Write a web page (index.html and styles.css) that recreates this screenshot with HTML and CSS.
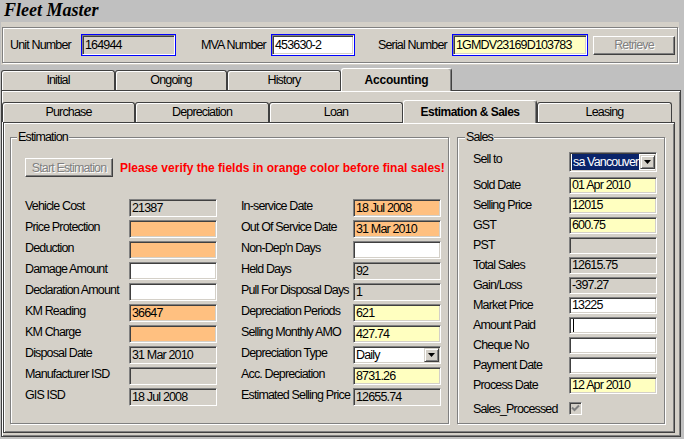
FILE: index.html
```html
<!DOCTYPE html>
<html>
<head>
<meta charset="utf-8">
<title>Fleet Master</title>
<link rel="stylesheet" href="styles.css">
</head>
<body>
<h1 class="title">Fleet Master</h1>

<div class="header-wrap">
  <div class="header">
    <span class="hlabel hl-unit">Unit Number</span>
    <div class="focus hf-unit"><div class="field hfield ro">164944</div></div>
    <span class="hlabel hl-mva">MVA Number</span>
    <div class="focus hf-mva"><div class="field hfield wh">453630-2</div></div>
    <span class="hlabel hl-serial">Serial Number</span>
    <div class="focus hf-serial"><div class="field hfield ye">1GMDV23169D103783</div></div>
    <button class="btn disabled retrieve" disabled>Retrieve</button>
  </div>
</div>

<div class="tabrow outer-tabs">
  <div class="tab ot1">Initial</div>
  <div class="tab ot2">Ongoing</div>
  <div class="tab ot3">History</div>
  <div class="tab sel ot4">Accounting</div>
</div>

<div class="pane outer-pane">
  <div class="tabrow inner-tabs">
    <div class="tab it1">Purchase</div>
    <div class="tab it2">Depreciation</div>
    <div class="tab it3">Loan</div>
    <div class="tab sel it4">Estimation &amp; Sales</div>
    <div class="tab it5">Leasing</div>
  </div>

  <div class="pane inner-pane">
    <fieldset class="group est">
      <legend>Estimation</legend>
      <div class="est-body">
        <div class="est-top">
          <button class="btn disabled start" disabled>Start Estimation</button>
          <span class="warn">Please verify the fields in orange color before final sales!</span>
        </div>
        <div class="est-cols">
          <div class="col col1">
            <div class="row"><span class="lbl">Vehicle Cost</span><div class="field ro">21387</div></div>
            <div class="row"><span class="lbl">Price Protection</span><div class="field or"></div></div>
            <div class="row"><span class="lbl">Deduction</span><div class="field or"></div></div>
            <div class="row"><span class="lbl">Damage Amount</span><div class="field wh"></div></div>
            <div class="row"><span class="lbl">Declaration Amount</span><div class="field wh"></div></div>
            <div class="row"><span class="lbl">KM Reading</span><div class="field or">36647</div></div>
            <div class="row"><span class="lbl">KM Charge</span><div class="field or"></div></div>
            <div class="row"><span class="lbl">Disposal Date</span><div class="field ro">31 Mar 2010</div></div>
            <div class="row"><span class="lbl">Manufacturer ISD</span><div class="field ro"></div></div>
            <div class="row"><span class="lbl">GIS ISD</span><div class="field ro">18 Jul 2008</div></div>
          </div>
          <div class="col col2">
            <div class="row"><span class="lbl">In-service Date</span><div class="field or">18 Jul 2008</div></div>
            <div class="row"><span class="lbl">Out Of Service Date</span><div class="field or">31 Mar 2010</div></div>
            <div class="row"><span class="lbl">Non-Dep'n Days</span><div class="field wh"></div></div>
            <div class="row"><span class="lbl">Held Days</span><div class="field ro">92</div></div>
            <div class="row"><span class="lbl">Pull For Disposal Days</span><div class="field ro">1</div></div>
            <div class="row"><span class="lbl">Depreciation Periods</span><div class="field ye">621</div></div>
            <div class="row"><span class="lbl">Selling Monthly AMO</span><div class="field ye">427.74</div></div>
            <div class="row"><span class="lbl">Depreciation Type</span>
              <div class="field select wh"><span class="sel-text">Daily</span><span class="dd-btn"><svg width="7" height="4" viewBox="0 0 7 4"><path d="M0 0H7L3.5 4Z" fill="#000"/></svg></span></div>
            </div>
            <div class="row"><span class="lbl">Acc. Depreciation</span><div class="field ye">8731.26</div></div>
            <div class="row"><span class="lbl">Estimated Selling Price</span><div class="field ro">12655.74</div></div>
          </div>
        </div>
      </div>
    </fieldset>

    <fieldset class="group sales">
      <legend>Sales</legend>
      <div class="sales-body">
        <div class="srow srow-sel"><span class="lbl">Sell to</span>
          <div class="field select sfield-sel wh"><span class="sel-text hl">sa Vancouver</span><span class="dd-btn"><svg width="7" height="4" viewBox="0 0 7 4"><path d="M0 0H7L3.5 4Z" fill="#000"/></svg></span></div>
        </div>
        <div class="srow"><span class="lbl">Sold Date</span><div class="field ye">01 Apr 2010</div></div>
        <div class="srow"><span class="lbl">Selling Price</span><div class="field ye">12015</div></div>
        <div class="srow"><span class="lbl">GST</span><div class="field ye">600.75</div></div>
        <div class="srow"><span class="lbl">PST</span><div class="field ro"></div></div>
        <div class="srow"><span class="lbl">Total Sales</span><div class="field ro">12615.75</div></div>
        <div class="srow"><span class="lbl">Gain/Loss</span><div class="field ro">-397.27</div></div>
        <div class="srow"><span class="lbl">Market Price</span><div class="field wh">13225</div></div>
        <div class="srow"><span class="lbl">Amount Paid</span><div class="field wh"><span class="caret"></span></div></div>
        <div class="srow"><span class="lbl">Cheque No</span><div class="field wh"></div></div>
        <div class="srow"><span class="lbl">Payment Date</span><div class="field wh"></div></div>
        <div class="srow"><span class="lbl">Process Date</span><div class="field ye">12 Apr 2010</div></div>
        <div class="srow srow-chk"><span class="lbl">Sales_Processed</span>
          <span class="check"><svg width="9" height="9" viewBox="0 0 9 9"><path d="M1 3.5L3.5 6L8 1.5" fill="none" stroke="#808080" stroke-width="2"/></svg></span>
        </div>
      </div>
    </fieldset>
  </div>
</div>
</body>
</html>
```

FILE: styles.css
```css
* { box-sizing: border-box; }

html, body { margin: 0; padding: 0; }

body {
  width: 684px;
  height: 439px;
  overflow: hidden;
  background: #c0c0c0;
  color: #000;
  font-family: "Liberation Sans", Arial, sans-serif;
  font-size: 12.5px;
  letter-spacing: -0.85px;
}

.title {
  margin: 0;
  height: 22px;
  padding-left: 4px;
  letter-spacing: 0;
  font: italic bold 18px/20px "Liberation Serif", "Times New Roman", serif;
}

/* ---------- header ---------- */
.header-wrap {
  margin: 0 5px 0 1px;
  padding: 5px 1px 2px 1px;
  background: #d4d0c8;
}

.header {
  height: 36px;
  display: flex;
  align-items: center;
  padding-left: 7px;
  border: 1px solid #808080;
  box-shadow: inset 1px 1px #fff, 1px 1px #fff;
}

.hlabel { line-height: 14px; white-space: nowrap; }
.hl-unit { width: 71px; }
.hl-mva { width: 70px; margin-left: 25px; }
.hl-serial { width: 74px; margin-left: 23px; }

.focus {
  height: 22px;
  border: 1px solid #0000ff;
}
.hf-unit { width: 95px; }
.hf-mva { width: 84px; }
.hf-serial { width: 136px; }

.field {
  width: 88px;
  height: 18px;
  padding: 0 2px;
  border: 1px solid;
  border-color: #808080 #fff #fff #808080;
  box-shadow: inset 1px 1px #404040, inset -1px -1px #d4d0c8;
  line-height: 16px;
  white-space: nowrap;
  overflow: hidden;
}
.focus .hfield { width: 100%; height: 20px; line-height: 18px; }

.ro { background: #d4d0c8; }
.wh { background: #fff; }
.ye { background: #ffffc0; }
.or { background: #ffc080; }

.btn {
  font: inherit;
  letter-spacing: inherit;
  padding: 0;
  background: #d4d0c8;
  border: 1px solid;
  border-color: #fff #404040 #404040 #fff;
  box-shadow: inset -1px -1px #808080;
  white-space: nowrap;
}
.btn.disabled { color: #808080; text-shadow: 1px 1px #fff; }
.retrieve { width: 82px; height: 19px; margin-left: 5px; }
.start { width: 88px; height: 19px; }

/* ---------- tabs ---------- */
.tabrow {
  display: flex;
  align-items: flex-end;
  height: 20px;
  position: relative;
  z-index: 1;
}
.outer-tabs { margin-top: 5px; padding-left: 1px; }

.tab {
  height: 20px;
  background: #d4d0c8;
  border: 1px solid #404040;
  border-bottom: none;
  border-radius: 3px 3px 0 0;
  box-shadow: inset 1px 1px #fff;
  text-align: center;
  line-height: 18px;
  white-space: nowrap;
}
.tab.sel {
  height: 23px;
  margin-bottom: -1px;
  border-color: #fff #404040 #404040 #fff;
  box-shadow: inset -1px 0 #808080;
  font: bold 12px/22px "Liberation Sans", Arial, sans-serif;
  letter-spacing: -0.2px;
}
.it4.sel { letter-spacing: -0.5px; }

.ot1 { width: 114px; }
.ot2 { width: 112px; }
.ot3 { width: 114px; }
.ot4 { width: 111px; }

.it1 { width: 133px; }
.it2 { width: 134px; }
.it3 { width: 134px; }
.it4 { width: 134px; }
.it5 { width: 135px; }

.pane {
  background: #d4d0c8;
  border: 1px solid #404040;
  box-shadow: inset 1px 1px #fff, inset -1px -1px #808080;
}

.outer-pane {
  margin-left: 1px;
  width: 680px;
  height: 347px;
  padding-top: 11px;
}

.inner-pane {
  margin-left: 1px;
  width: 672px;
  height: 311px;
  padding: 7px 0 0 6px;
  display: flex;
  gap: 8px;
  align-items: flex-start;
}

/* ---------- group boxes ---------- */
.group {
  margin: 0;
  padding: 0;
  min-width: 0;
  height: 294px;
  border: 1px solid #808080;
  box-shadow: inset 1px 1px #fff, 1px 1px #fff;
}
.group legend {
  margin-left: 6px;
  padding: 0 1px;
  line-height: 14px;
  background: #d4d0c8;
}
.est { width: 439px; }
.sales { width: 208px; }
.sales legend { margin-left: 7px; }

.est-body { padding: 14px 0 0 14px; }

.est-top {
  display: flex;
  align-items: center;
  gap: 7px;
  height: 19px;
}
.warn {
  color: #ff0000;
  font: bold 12px/14px "Liberation Sans", Arial, sans-serif;
  letter-spacing: 0;
  white-space: nowrap;
}

.est-cols {
  display: flex;
  gap: 24px;
  margin-top: 22px;
}
.col {
  display: flex;
  flex-direction: column;
  gap: 3px;
}
.row {
  display: flex;
  height: 18px;
}
.lbl {
  line-height: 14px;
  white-space: nowrap;
}
.col1 .lbl { width: 104px; }
.col2 .lbl { width: 112px; }

/* selects */
.select {
  display: flex;
  align-items: center;
  padding: 1px 1px 1px 2px;
}
.sel-text {
  flex: 1;
  min-width: 0;
  overflow: hidden;
  line-height: 14px;
}
.sel-text.hl {
  background: #0a246a;
  color: #fff;
  height: 16px;
  line-height: 16px;
  padding-left: 1px;
  margin-right: 1px;
}
.dd-btn {
  width: 15px;
  height: 14px;
  flex: none;
  display: flex;
  align-items: center;
  justify-content: center;
  background: #d4d0c8;
  border: 1px solid;
  border-color: #d4d0c8 #404040 #404040 #d4d0c8;
  box-shadow: inset 1px 1px #fff, inset -1px -1px #808080;
}

/* sales */
.sales-body {
  padding: 8px 0 0 15px;
  display: flex;
  flex-direction: column;
  gap: 3px;
}
.srow {
  display: flex;
  height: 17px;
}
.srow .lbl { width: 96px; margin-top: 1px; }
.srow .field { height: 17px; line-height: 15px; }
.srow-sel { height: 20px; margin-bottom: 2px; }
.srow-sel .lbl { margin-top: 0; }
.srow .sfield-sel { height: 20px; }
.srow-chk { margin-top: 3px; align-items: center; }
.srow-chk .lbl { margin-top: 0; }

.caret {
  display: inline-block;
  width: 1px;
  height: 13px;
  background: #000;
  vertical-align: middle;
  margin-left: 1px;
}

.check {
  width: 13px;
  height: 13px;
  display: flex;
  align-items: center;
  justify-content: center;
  background: #d4d0c8;
  border: 1px solid;
  border-color: #808080 #fff #fff #808080;
  box-shadow: inset 1px 1px #404040, inset -1px -1px #d4d0c8;
}
```
